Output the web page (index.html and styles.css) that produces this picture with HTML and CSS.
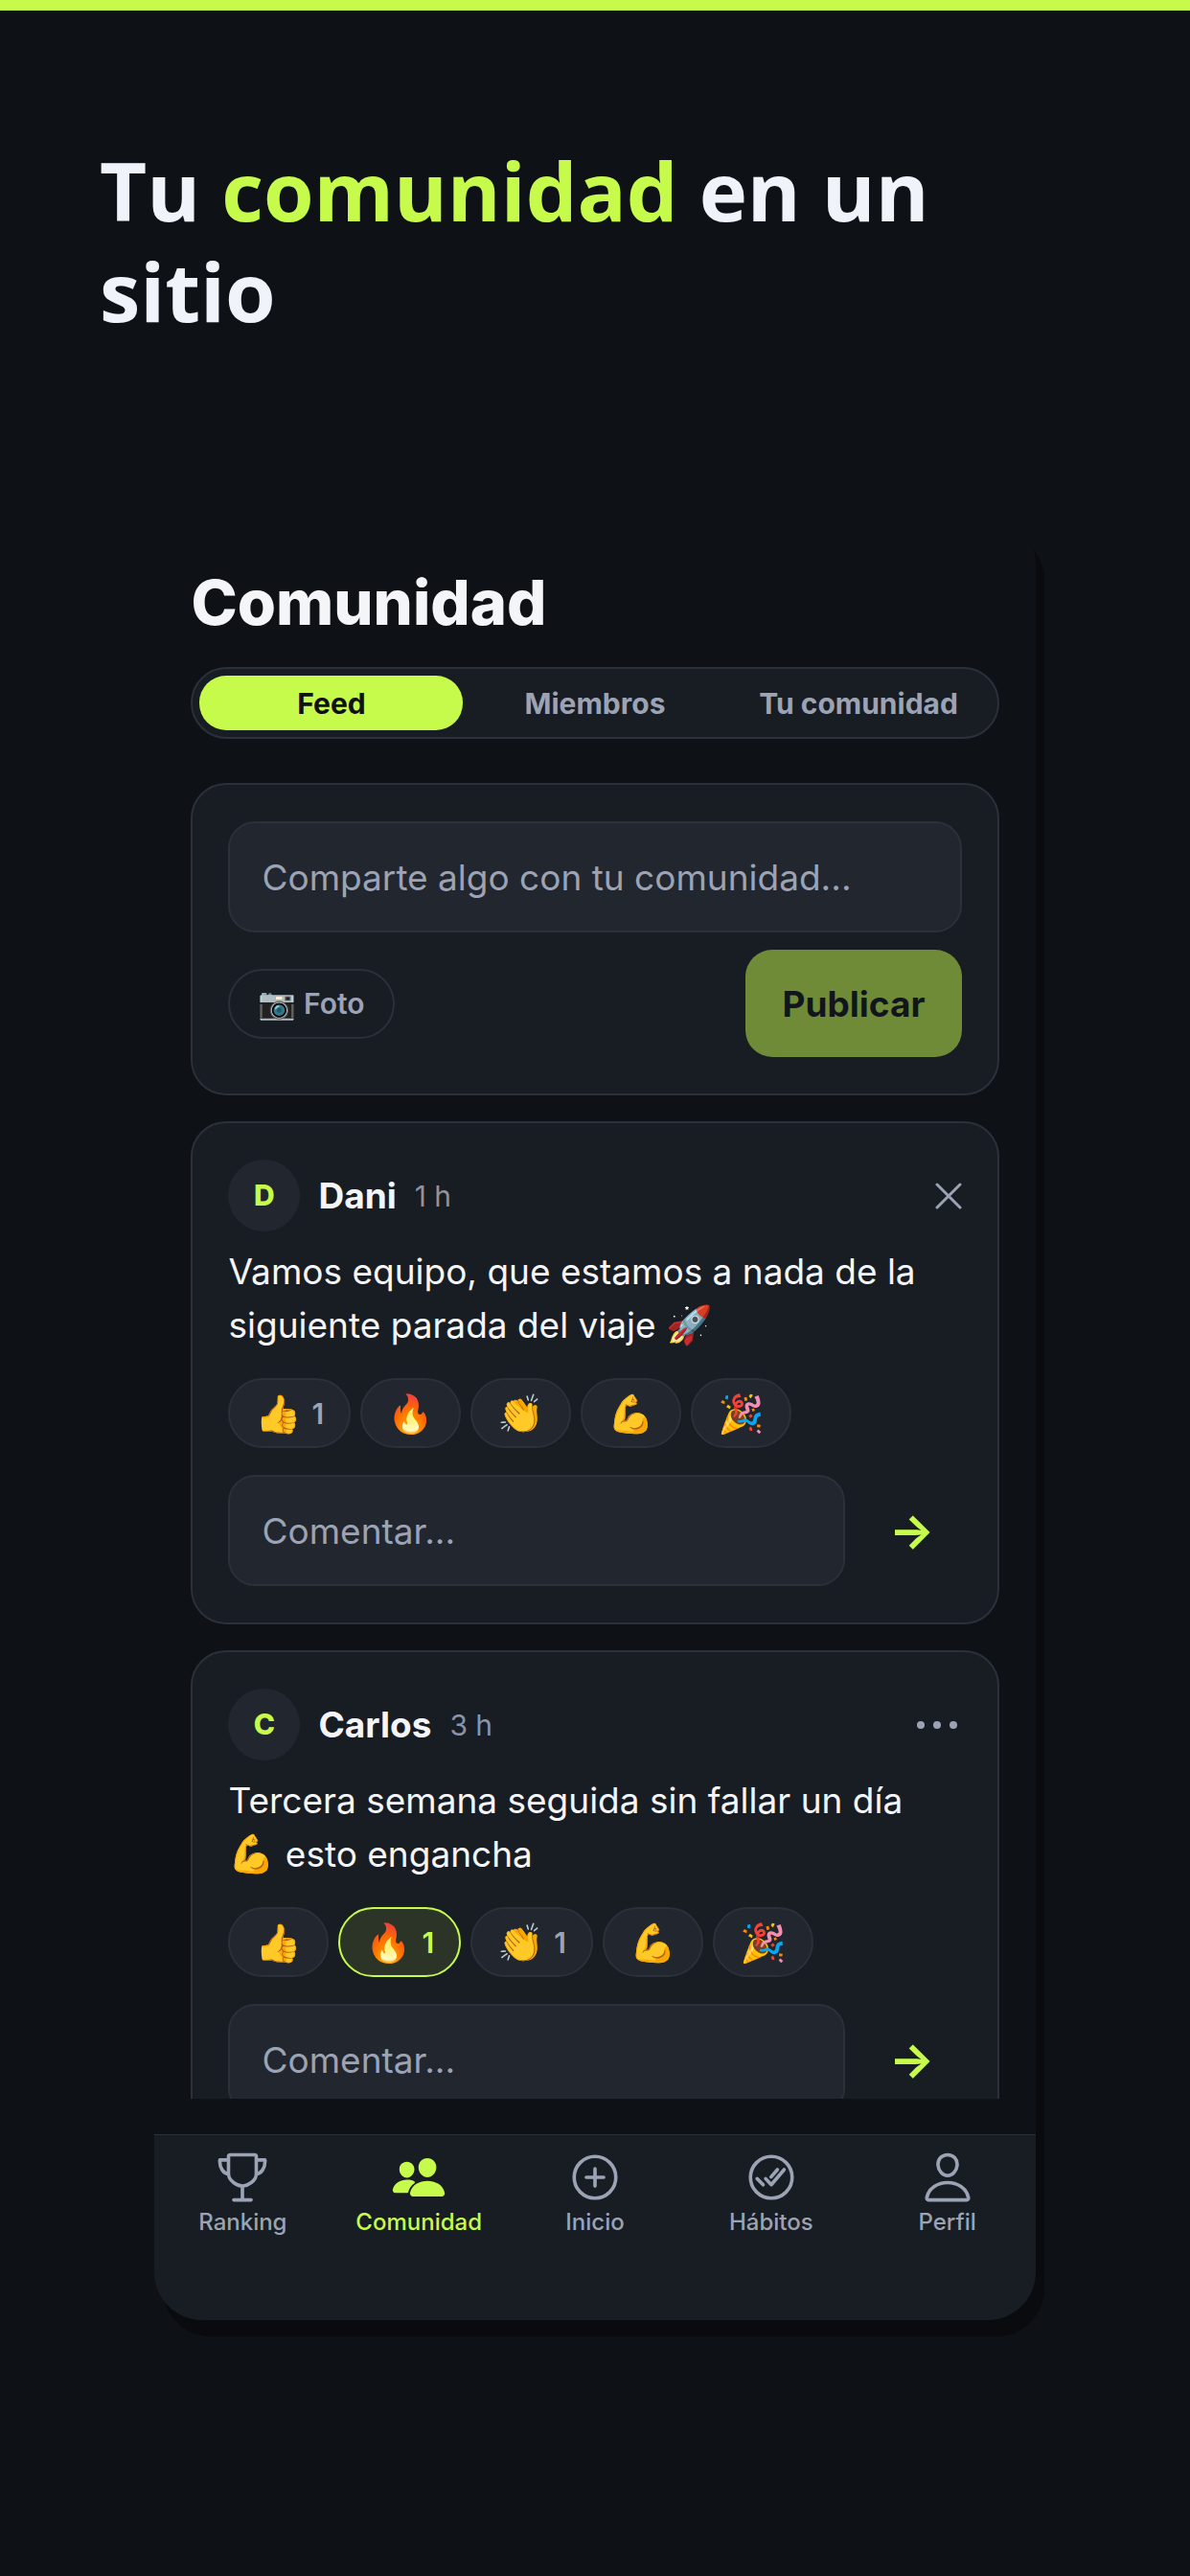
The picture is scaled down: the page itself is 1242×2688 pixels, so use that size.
FILE: index.html
```
<!DOCTYPE html>
<html lang="es">
<head>
    <meta charset="UTF-8">
    <meta name="viewport" content="width=device-width, initial-scale=1.0">
    <title>Comunidad</title>
    <link rel="stylesheet" href="styles.css">
</head>
<body>
    <h1 class="hero">Tu <span>comunidad</span> en un sitio</h1>

    <div class="phone">
        <main class="screen">
            <h2>Comunidad</h2>

            <div class="tabs">
                <button class="tab active">Feed</button>
                <button class="tab">Miembros</button>
                <button class="tab">Tu comunidad</button>
            </div>

            <div class="feed">
                <section class="card">
                    <input class="field" type="text" placeholder="Comparte algo con tu comunidad..." aria-label="Nueva publicación">
                    <div class="actions">
                        <button class="photo"><i>📷</i> Foto</button>
                        <button class="publish" disabled>Publicar</button>
                    </div>
                </section>

                <article class="card">
                    <header class="post-head">
                        <span class="avatar">D</span>
                        <strong>Dani</strong>
                        <time>1 h</time>
                        <button class="icon-btn" aria-label="Cerrar">
                            <svg width="28" height="28" viewBox="0 0 28 28"><path d="M2 2l24 24M26 2L2 26"/></svg>
                        </button>
                    </header>
                    <p>Vamos equipo, que estamos a nada de la siguiente parada del viaje <i>🚀</i></p>
                    <div class="reactions">
                        <button><i>👍</i><b>1</b></button>
                        <button><i>🔥</i></button>
                        <button><i>👏</i></button>
                        <button><i>💪</i></button>
                        <button><i>🎉</i></button>
                    </div>
                    <div class="comment">
                        <input class="field" type="text" placeholder="Comentar..." aria-label="Comentar">
                        <button class="send" aria-label="Enviar">→</button>
                    </div>
                </article>

                <article class="card">
                    <header class="post-head">
                        <span class="avatar">C</span>
                        <strong>Carlos</strong>
                        <time>3 h</time>
                        <button class="icon-btn" aria-label="Más opciones">
                            <svg class="dots" width="48" height="28" viewBox="0 0 48 28"><circle cx="5" cy="14" r="4"/><circle cx="22" cy="14" r="4"/><circle cx="39" cy="14" r="4"/></svg>
                        </button>
                    </header>
                    <p>Tercera semana seguida sin fallar un día <i>💪</i> esto engancha</p>
                    <div class="reactions">
                        <button><i>👍</i></button>
                        <button class="mine"><i>🔥</i><b>1</b></button>
                        <button><i>👏</i><b>1</b></button>
                        <button><i>💪</i></button>
                        <button><i>🎉</i></button>
                    </div>
                    <div class="comment">
                        <input class="field" type="text" placeholder="Comentar..." aria-label="Comentar">
                        <button class="send" aria-label="Enviar">→</button>
                    </div>
                </article>
            </div>
        </main>

        <nav class="tabbar">
            <a href="#ranking">
                <svg viewBox="0 0 512 512"><path d="M176 464h160M256 464V336M384 224c0-50.640-.080-134.630-.120-160a16 16 0 0 0-16-16l-223.790.260a16 16 0 0 0-16 15.950c0 30.580-.130 129.170-.130 159.790 0 64.280 83 112 128 112s128-47.720 128-112zM128 96H48v16c0 55.220 33.550 112 80 112M384 96h80v16c0 55.220-33.550 112-80 112"/></svg>
                Ranking
            </a>
            <a href="#comunidad" class="active">
                <svg viewBox="0 0 512 512"><path d="M336 256c-20.560 0-40.440-9.180-56-25.840-15.130-16.250-24.370-37.920-26-61-1.740-24.620 5.770-47.260 21.140-63.760S312 80 336 80c23.830 0 45.380 9.060 60.700 25.520 15.470 16.620 23 39.220 21.260 63.630-1.670 23.110-10.900 44.770-26 61C376.440 246.820 356.570 256 336 256zM467.830 432H204.180a27.710 27.710 0 0 1-22-10.670 30.220 30.220 0 0 1-5.260-25.790c8.420-33.810 29.280-61.850 60.320-81.080C264.790 297.400 299.860 288 336 288c36.850 0 71 9 98.710 26.050 31.110 19.130 52 47.330 60.380 81.550a30.270 30.270 0 0 1-5.320 25.780A27.680 27.680 0 0 1 467.830 432zM147 260c-35.190 0-66.130-32.720-69-72.930C76.580 166.470 83 147.420 96 133.450 108.860 119.620 127 112 147 112s38 7.660 50.930 21.570c13.100 14.080 19.500 33.090 18 53.520C213 227.290 182.080 260 147 260zM212.660 291.450c-17.590-8.600-40.420-12.900-65.650-12.900-29.460 0-58.070 7.680-80.570 21.620C41 316 23.870 339 17.050 366.720a27.490 27.490 0 0 0 4.790 23.490A25.260 25.260 0 0 0 41.940 400H152a8 8 0 0 0 7.870-6.570c7-32 24-58 56-81.430 8-6 6-16-3.210-20.550z"/></svg>
                Comunidad
            </a>
            <a href="#inicio">
                <svg viewBox="0 0 512 512"><circle cx="256" cy="256" r="192"/><path d="M256 176v160M336 256H176"/></svg>
                Inicio
            </a>
            <a href="#habitos">
                <svg viewBox="0 0 512 512"><circle cx="256" cy="256" r="192"/><path d="M374 185L256 324l-52-56M181 324l-56-56M312 185l-58 68"/></svg>
                Hábitos
            </a>
            <a href="#perfil">
                <svg viewBox="0 0 512 512"><path d="M344 144c-3.920 52.870-44 96-88 96s-84.150-43.120-88-96c-4-55 35-96 88-96s92 42 88 96zM256 304c-87 0-175.300 48-191.640 138.600C62.390 453.520 68.570 464 80 464h352c11.440 0 17.620-10.480 15.650-21.400C431.300 352 343 304 256 304z"/></svg>
                Perfil
            </a>
        </nav>
    </div>
</body>
</html>
```
FILE: styles.css
```
* { box-sizing: border-box; margin: 0; }
body { background: #0e1116; color: #f4f5f8; font-family: Inter, sans-serif; border-top: 11px solid #c6fa4b; padding-bottom: 100px; }
button, input { font: inherit; color: inherit; }
button { border: none; background: none; padding: 0; cursor: pointer; }
i { font-style: normal; font-size: 39px; line-height: 40px; }

.hero { padding: 135px 104px 182px; font-family: "Open Sans", "Noto Sans", sans-serif; font-size: 85px; line-height: 105px; font-weight: 700; color: #f0f3fa; }
.hero span { color: #c6fa4b; }

.phone { width: 74%; margin: 0 auto; border-radius: 50px; overflow: hidden; background: #0e1116; box-shadow: 9px 17px 0 #090b0e; }
.screen { padding: 52px 38px 37px; }
h2 { font-size: 65px; line-height: 78px; font-weight: 800; margin-bottom: 28px; }

.tabs { display: flex; padding: 7px; border: 2px solid #2b303b; border-radius: 38px; background: #181c23; margin-bottom: 46px; }
.tab { flex: 1 1 0; height: 57px; border-radius: 28px; font-size: 30px; font-weight: 700; color: #9ba3b4; }
.tab.active { background: #c6fa4b; color: #0e1116; }

.feed { height: 1373px; overflow: hidden; display: flex; flex-direction: column; gap: 27px; }
.card { flex: none; padding: 38px 37px; border: 2px solid #2b303b; border-radius: 37px; background: #181c23; }
.field { display: block; width: 100%; height: 116px; padding: 0 33px; border: 2px solid #2b303b; border-radius: 28px; background: #22262f; font-size: 37px; }
.field::placeholder { color: #9ba3b4; opacity: 1; }

.actions { display: flex; justify-content: space-between; align-items: center; margin-top: 18px; }
.photo { height: 73px; padding: 0 29px; border: 2px solid #2b303b; border-radius: 37px; font-size: 30px; font-weight: 600; color: #9ba3b4; }
.photo i { font-size: 32px; }
.publish { height: 112px; padding: 0 38px; border-radius: 28px; background: #c6fa4b; color: #0e1116; font-size: 37px; font-weight: 700; opacity: 0.5; }

.post-head { display: flex; align-items: center; gap: 19px; }
.avatar { width: 75px; height: 75px; border-radius: 50%; background: #22262f; color: #c6fa4b; font-size: 30px; line-height: 75px; font-weight: 800; text-align: center; }
.post-head strong { font-size: 37px; font-weight: 700; }
.post-head time { font-size: 30px; color: #8b93a4; }
.icon-btn { margin-left: auto; }
.icon-btn svg { display: block; fill: none; stroke: #9ba3b4; stroke-width: 3; stroke-linecap: round; }
.icon-btn .dots { fill: #9ba3b4; stroke: none; }

.card p { margin: 14px 0 27px; padding-right: 20px; font-size: 37px; line-height: 56px; }
.reactions { display: flex; gap: 10px; }
.reactions button { display: flex; align-items: center; gap: 10px; height: 73px; padding: 0 26px; border: 2px solid #2b303b; border-radius: 37px; background: #22262f; color: #9ba3b4; }
.reactions b { font-size: 30px; font-weight: 600; }
.reactions .mine { background: #2b3427; border-color: #c6fa4b; color: #c6fa4b; }

.comment { display: flex; gap: 18px; margin-top: 28px; }
.comment .field { flex: 1; width: auto; min-width: 0; }
.send { width: 104px; font-size: 50px; font-weight: 700; color: #c6fa4b; }

.tabbar { display: flex; height: 194px; padding-top: 15px; border-top: 1px solid #2b303b; background: #181c23; }
.tabbar a { flex: 1 1 0; display: flex; flex-direction: column; align-items: center; gap: 4px; color: #9ba3b4; font-size: 24px; line-height: 28px; font-weight: 500; text-decoration: none; }
.tabbar svg { width: 58px; height: 58px; fill: none; stroke: currentColor; stroke-width: 32; stroke-linecap: round; stroke-linejoin: round; }
.tabbar a.active { color: #c6fa4b; }
.tabbar .active svg { fill: currentColor; stroke: none; }
```
